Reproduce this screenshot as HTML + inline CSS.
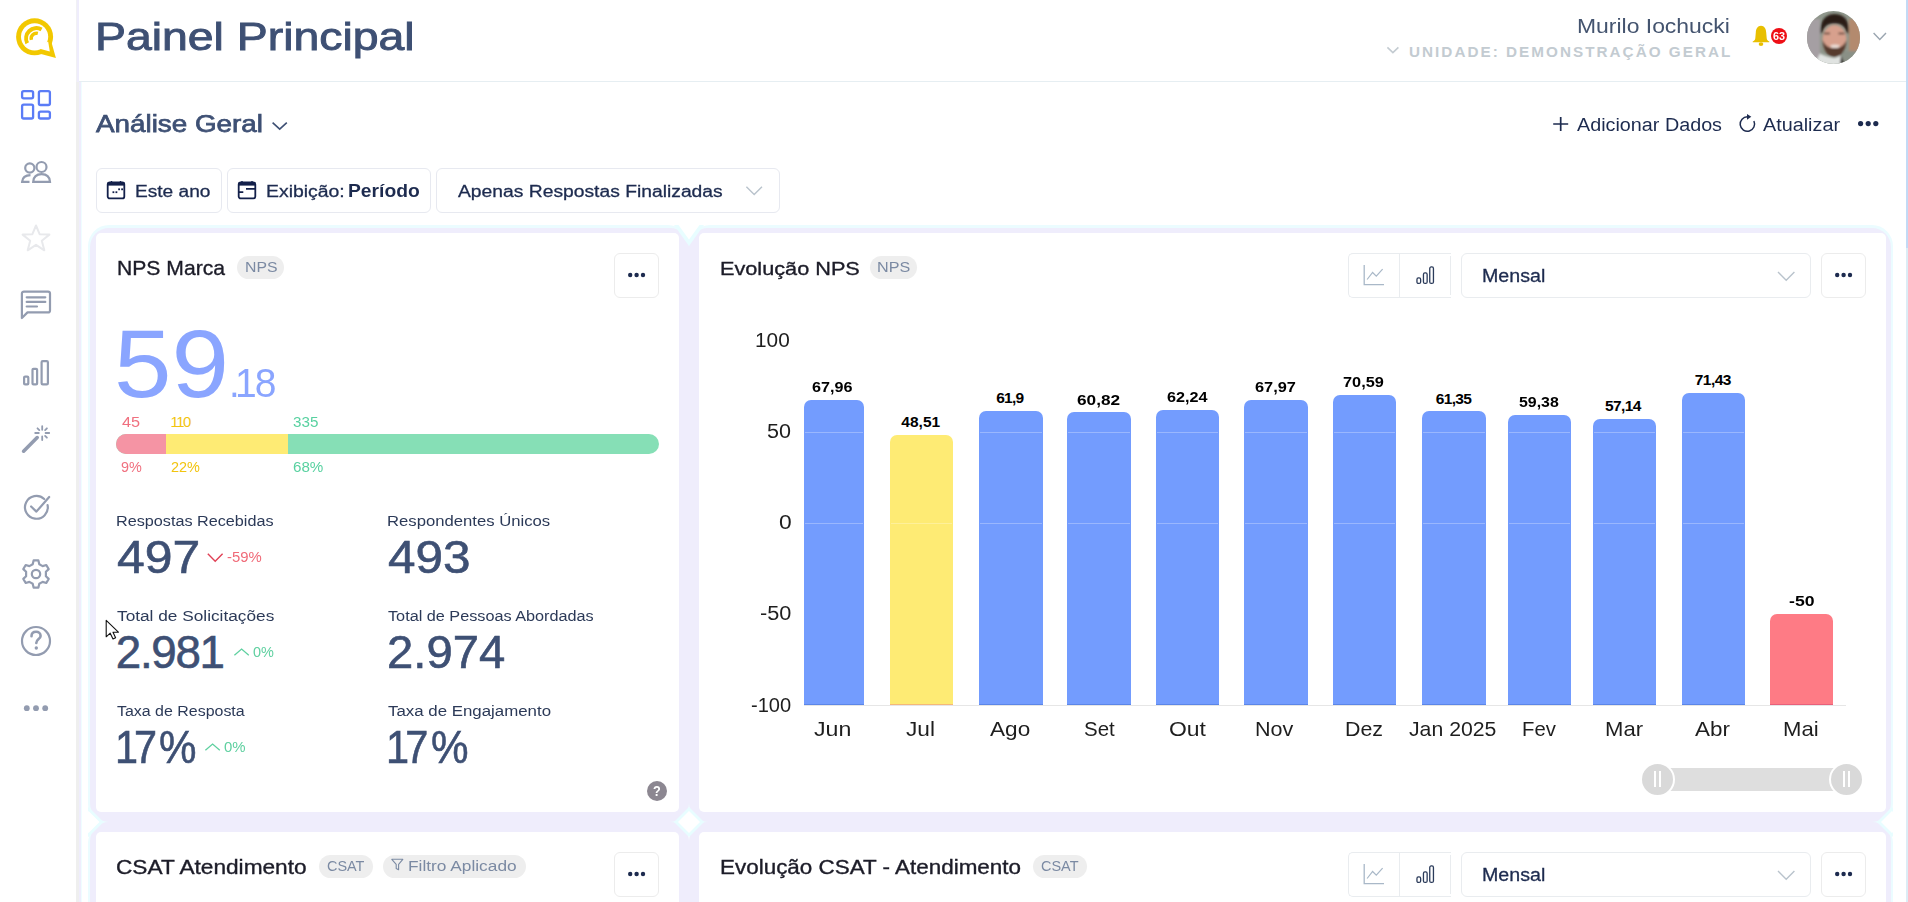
<!DOCTYPE html>
<html lang="pt-BR">
<head>
<meta charset="utf-8">
<title>Painel Principal</title>
<style>
html,body{margin:0;padding:0;width:1908px;height:902px;overflow:hidden;background:#fff;}
body{position:relative;font-family:"Liberation Sans",sans-serif;}
.a{position:absolute;box-sizing:border-box;}
.t{position:absolute;white-space:nowrap;transform-origin:0 0;font-family:"Liberation Sans",sans-serif;}
svg{position:absolute;overflow:visible;}
.btn{position:absolute;box-sizing:border-box;border:1px solid #e7e9f0;border-radius:6px;background:#fff;}
.item-sh{position:absolute;border-radius:21px;background:#ebfcff;}
.item{position:absolute;border-radius:19px;background:#efedfc;}
.card{position:absolute;border-radius:5px;background:#fff;}
.badge{position:absolute;border-radius:12px;background:#eeeeee;}
</style>
</head>
<body>
<!-- sidebar -->
<div class="a" style="left:0;top:0;width:76px;height:902px;background:#fff;"></div>
<div class="a" style="left:76px;top:0;width:1px;height:82px;background:#f1f1f4;"></div>
<div class="a" style="left:77px;top:0;width:2px;height:82px;background:#efedfc;"></div>
<div class="a" style="left:76px;top:82px;width:3px;height:820px;background:#efefef;"></div>
<div class="a" style="left:79px;top:82px;width:2px;height:820px;background:#efedfc;"></div>
<div class="a" style="left:81px;top:82px;width:1px;height:820px;background:#effdff;"></div>
<!-- header bottom line -->
<div class="a" style="left:79px;top:81px;width:1827px;height:1px;background:#e6eef2;"></div>
<!-- scrollbar -->
<div class="a" style="left:1906px;top:0;width:2px;height:248px;background:#c3daf5;"></div>
<div class="a" style="left:1906px;top:248px;width:2px;height:654px;background:#dcecf5;"></div>

<!-- logo -->
<svg width="80" height="80" style="left:0;top:0" viewBox="0 0 80 80">
  <circle cx="34.6" cy="36.8" r="18.5" fill="#f2c800"/>
  <polygon points="51.6,42.7 55.9,57.9 41,53.9 44,44" fill="#f2c800"/>
  <circle cx="34.6" cy="36.8" r="13.6" fill="#fff"/>
  <polygon points="48.2,41.7 49.8,51.5 40.7,49.1 42,44" fill="#fff"/>
  <path d="M27.23 43.22 A10.4 10.4 0 0 1 41.54 29.4" fill="none" stroke="#f2c800" stroke-width="4"/>
  <path d="M31.38 39.87 A5.3 5.3 0 0 1 37.87 33.38" fill="none" stroke="#f2c800" stroke-width="3.4"/>
</svg>

<!-- sidebar icons -->
<svg width="80" height="760" style="left:0;top:0" viewBox="0 0 80 760">
  <g fill="none" stroke="#5b7cf6" stroke-width="2.3">
    <rect x="22.1" y="91.1" width="11" height="7.2" rx="1.6"/>
    <rect x="22.1" y="104.6" width="11" height="13.9" rx="1.6"/>
    <rect x="38.9" y="91.1" width="11" height="13.9" rx="1.6"/>
    <rect x="38.9" y="111.6" width="11" height="6.9" rx="1.6"/>
  </g>
  <g fill="none" stroke="#939cb0" stroke-width="2.2">
    <!-- people -->
    <circle cx="29.8" cy="168" r="4.6"/>
    <circle cx="41.5" cy="167" r="5"/>
    <path d="M33.2 181.8 C33.6 176.5 37 174.2 41.6 174.2 C46.2 174.2 49.6 176.5 50 181.8 Z"/>
    <path d="M30.5 175.2 C25.5 175.4 22.4 178 22.1 181.8 L29.5 181.8"/>
  </g>
  <!-- star -->
  <path d="M36 225.5 L39.6 234.2 L49.4 234.6 L41.8 240.7 L44.3 250.3 L36 244.8 L27.7 250.3 L30.2 240.7 L22.6 234.6 L32.4 234.2 Z" fill="none" stroke="#e8e9ec" stroke-width="2" stroke-linejoin="round"/>
  <g fill="none" stroke="#939cb0" stroke-width="2.2" stroke-linecap="round" stroke-linejoin="round">
    <!-- chat -->
    <path d="M24 291.6 H48 A2 2 0 0 1 50 293.6 V310.4 A2 2 0 0 1 48 312.4 H27.5 L21.9 318 V293.6 A2 2 0 0 1 24 291.6 Z"/>
    <path d="M26.7 297.3 H45.3 M26.7 301.9 H45.3 M26.7 306.5 H37"/>
    <!-- bars -->
    <rect x="24.1" y="376.6" width="4.2" height="7.8" rx="1"/>
    <rect x="32.5" y="368.8" width="4.6" height="15.6" rx="1"/>
    <rect x="41.6" y="361.1" width="6.3" height="23.3" rx="1.2"/>
    <!-- check circle -->
    <path d="M47.6 505.2 A11.4 11.4 0 1 1 44.2 499.0"/>
    <path d="M31.1 506.5 L36.4 511.6 L49.2 497"/>
    <!-- gear -->
    <circle cx="36" cy="574" r="4.2"/>
    <path d="M33.6 560.4 H38.4 L39.3 564.2 L42.6 566.1 L46.3 565 L48.7 569.1 L45.9 571.8 V576.2 L48.7 578.9 L46.3 583 L42.6 581.9 L39.3 583.8 L38.4 587.6 H33.6 L32.7 583.8 L29.4 581.9 L25.7 583 L23.3 578.9 L26.1 576.2 V571.8 L23.3 569.1 L25.7 565 L29.4 566.1 L32.7 564.2 Z"/>
    <!-- help -->
    <circle cx="36" cy="641" r="14"/>
  </g>
  <!-- wand -->
  <g stroke="#939cb0" stroke-linecap="round">
    <path d="M23.6 451.2 L37.2 437.6" stroke-width="3.6"/>
    <path d="M42.2 426.2 V429.8 M42.2 436.4 V440 M35.2 433 H38.8 M45.6 433 H49.2 M37.5 428.3 L39.3 430.1 M45.1 435.9 L46.9 437.7 M46.9 428.3 L45.1 430.1" stroke-width="1.8"/>
  </g>
  <path d="M36.7 638.4 M31.5 636.3 C31.5 633.4 33.5 631.8 36.1 631.8 C38.7 631.8 40.6 633.4 40.6 635.9 C40.6 638.9 36.3 639.3 36.3 642.9" fill="none" stroke="#939cb0" stroke-width="2.6" stroke-linecap="round"/>
  <circle cx="36.3" cy="648" r="1.7" fill="#939cb0"/>
  <!-- dots -->
  <circle cx="26.8" cy="708.2" r="2.9" fill="#939cb0"/>
  <circle cx="36" cy="708.2" r="2.9" fill="#939cb0"/>
  <circle cx="45.2" cy="708.2" r="2.9" fill="#939cb0"/>
</svg>

<!-- header right -->
<svg width="20" height="20" style="left:1380px;top:40px" viewBox="0 0 20 20">
  <path d="M7.4 7.4 L12.9 12.6 L18.4 7.4" fill="none" stroke="#c3cbd1" stroke-width="1.6"/>
</svg>
<svg width="40" height="30" style="left:1748px;top:20px" viewBox="0 0 40 30">
  <path d="M13 5.8 C9.6 5.8 8 8.8 7.8 12.5 L7.3 18.2 C7.1 19.9 6.1 20.9 4.7 21.4 V22.3 H21.3 V21.4 C19.9 20.9 18.9 19.9 18.7 18.2 L18.2 12.5 C18 8.8 16.4 5.8 13 5.8 Z" fill="#e8bf00"/>
  <ellipse cx="13" cy="24.1" rx="2.3" ry="1.9" fill="#e8bf00"/>
  <circle cx="31" cy="16" r="8" fill="#ee0f16"/>
</svg>
<!-- avatar -->
<svg width="53" height="53" style="left:1807px;top:11px" viewBox="0 0 53 53">
  <defs>
    <clipPath id="avc"><circle cx="26.5" cy="26.5" r="26.5"/></clipPath>
    <filter id="avb" x="-20%" y="-20%" width="140%" height="140%"><feGaussianBlur stdDeviation="1.3"/></filter>
  </defs>
  <g clip-path="url(#avc)">
    <rect x="0" y="0" width="53" height="53" fill="#8f968b"/>
    <g filter="url(#avb)">
      <rect x="-4" y="8" width="17" height="50" fill="#a59fa3"/>
      <rect x="42" y="8" width="15" height="36" fill="#b38a6e"/>
      <rect x="36" y="40" width="20" height="15" fill="#8a9086"/>
      <ellipse cx="27.5" cy="28.5" rx="12" ry="14.5" fill="#d7a08d"/>
      <path d="M13.5 23 C12.5 9 19 3 27.5 3 C37 3 43 9 41.5 23 L39.5 21 C38 15 34 12.5 27.5 12.5 C21 12.5 17 15 15.5 21 Z" fill="#2a1e18"/>
      <path d="M17 22.5 H23 M31.5 22.5 H37.5" stroke="#4a3028" stroke-width="1.6"/>
      <path d="M15.5 29 C16.5 41 21.5 46 27.5 46 C33.5 46 38.5 41 39.5 29 C36.5 35.5 32.5 37 27.5 37 C22.5 37 18.5 35.5 15.5 29 Z" fill="#573a2e"/>
      <ellipse cx="28" cy="35.2" rx="4.6" ry="1.8" fill="#eadbd4"/>
      <path d="M7 54 L13 42.5 C17 44.5 22 46.5 27.5 47 L34 44.5 L35 54 Z" fill="#e0e3e1"/>
      <path d="M34 44 L38 54 L33 54 Z" fill="#2f2b29"/>
    </g>
  </g>
</svg>
<svg width="20" height="20" style="left:1870px;top:28px" viewBox="0 0 20 20">
  <path d="M3.6 5 L9.8 11.4 L16 5" fill="none" stroke="#9aa5b0" stroke-width="1.4"/>
</svg>

<!-- toolbar icons -->
<svg width="30" height="20" style="left:268px;top:116px" viewBox="0 0 30 20">
  <path d="M4.6 6.6 L11.7 13.2 L18.8 6.6" fill="none" stroke="#3e5074" stroke-width="1.6"/>
</svg>
<svg width="20" height="20" style="left:1551px;top:114px" viewBox="0 0 20 20">
  <path d="M9.7 3 V17 M2.2 10 H17.2" fill="none" stroke="#1d2b4f" stroke-width="1.7"/>
</svg>
<svg width="20" height="20" style="left:1737px;top:113px" viewBox="0 0 20 20">
  <path d="M16.9 7.96 A7.2 7.2 0 1 1 10.6 3.8" fill="none" stroke="#1d2b4f" stroke-width="1.5"/>
  <polygon points="10,0.9 14.3,3.8 10,6.7" fill="#1d2b4f"/>
</svg>
<svg width="30" height="10" style="left:1855px;top:119px" viewBox="0 0 30 10">
  <circle cx="5.6" cy="4.6" r="2.6" fill="#1d2b4f"/><circle cx="13.2" cy="4.6" r="2.6" fill="#1d2b4f"/><circle cx="20.8" cy="4.6" r="2.6" fill="#1d2b4f"/>
</svg>

<!-- filter buttons -->
<div class="btn" style="left:96px;top:168px;width:126px;height:45px;"></div>
<div class="btn" style="left:227px;top:168px;width:204px;height:45px;"></div>
<div class="btn" style="left:436px;top:168px;width:344px;height:45px;"></div>
<svg width="20" height="20" style="left:106px;top:180px" viewBox="0 0 20 20">
  <rect x="1.7" y="2.4" width="16.6" height="16" rx="2" fill="none" stroke="#13204a" stroke-width="1.8"/>
  <rect x="1.7" y="2" width="16.6" height="3.6" fill="#13204a"/>
  <path d="M5.5 1 V3 M14.5 1 V3" stroke="#13204a" stroke-width="1.4"/>
  <rect x="6.5" y="11.3" width="1.8" height="1.8" fill="#13204a"/><rect x="9.5" y="11.3" width="1.8" height="1.8" fill="#13204a"/>
  <rect x="12.2" y="8.4" width="1.8" height="1.8" fill="#13204a"/><rect x="15.2" y="8.4" width="1.8" height="1.8" fill="#13204a"/>
</svg>
<svg width="20" height="20" style="left:237px;top:180px" viewBox="0 0 20 20">
  <rect x="1.7" y="2.4" width="16.6" height="16" rx="2" fill="none" stroke="#13204a" stroke-width="1.8"/>
  <rect x="1.7" y="2" width="16.6" height="3.6" fill="#13204a"/>
  <path d="M5 1 V3 M15 1 V3" stroke="#13204a" stroke-width="1.4"/>
  <path d="M9 8.9 H18 M1.7 12.2 H6.3" stroke="#13204a" stroke-width="1.8"/>
</svg>
<svg width="20" height="20" style="left:744px;top:181px" viewBox="0 0 20 20">
  <path d="M2.4 5.8 L10.2 13.6 L18 5.8" fill="none" stroke="#b9c3cc" stroke-width="1.4"/>
</svg>

<!-- grid items -->
<div class="item-sh" style="left:88px;top:225px;width:601px;height:600px;"></div>
<div class="item-sh" style="left:689px;top:225px;width:1204px;height:600px;"></div>
<div class="item-sh" style="left:88px;top:822px;width:601px;height:200px;"></div>
<div class="item-sh" style="left:689px;top:822px;width:1204px;height:200px;"></div>
<div class="item" style="left:90px;top:227.5px;width:599px;height:594.5px;"></div>
<div class="item" style="left:689px;top:227.5px;width:1202px;height:594.5px;"></div>
<div class="item" style="left:90px;top:822px;width:599px;height:200px;"></div>
<div class="item" style="left:689px;top:822px;width:1202px;height:200px;"></div>
<!-- white intersection diamond covers -->
<svg width="1908" height="902" style="left:0;top:0" viewBox="0 0 1908 902"><defs><clipPath id="dc"><rect x="88" y="225" width="1805" height="700"/></clipPath></defs><g clip-path="url(#dc)"><polygon points="674,225 704,225 689,246" fill="#e8fdff"/><polygon points="678.5,225 699.5,225 689,239.5" fill="#fff"/><polygon points="674,822 689,807 704,822 689,837" fill="#e8fdff"/><polygon points="678,822 689,811 700,822 689,833" fill="#fff"/><polygon points="73.5,822 88.5,807 103.5,822 88.5,837" fill="#e8fdff"/><polygon points="77.5,822 88.5,811 99.5,822 88.5,833" fill="#fff"/><polygon points="1877,822 1892,807 1907,822 1892,837" fill="#e8fdff"/><polygon points="1881,822 1892,811 1903,822 1892,833" fill="#fff"/></g></svg>

<div class="card" style="left:96px;top:233px;width:583px;height:579px;"></div>
<div class="card" style="left:699px;top:233px;width:1187px;height:579px;"></div>
<div class="card" style="left:96px;top:832px;width:583px;height:200px;"></div>
<div class="card" style="left:699px;top:832px;width:1187px;height:200px;"></div>

<!-- card 1 -->
<div class="badge" style="left:237px;top:256px;width:47px;height:23px;"></div>
<div class="btn" style="left:614px;top:253px;width:45px;height:45px;border-color:#ececec;"></div>
<svg width="20" height="6" style="left:627px;top:272px" viewBox="0 0 20 6">
  <circle cx="3.2" cy="3" r="2.2" fill="#1d2b4f"/><circle cx="9.6" cy="3" r="2.2" fill="#1d2b4f"/><circle cx="16" cy="3" r="2.2" fill="#1d2b4f"/>
</svg>
<div class="a" style="left:116px;top:434px;width:543px;height:20px;border-radius:10px;overflow:hidden;background:#86dfb6;">
  <div class="a" style="left:0;top:0;width:50px;height:20px;background:#f594a4;"></div>
  <div class="a" style="left:50px;top:0;width:122px;height:20px;background:#feeb74;"></div>
</div>
<svg width="20" height="14" style="left:205px;top:550px" viewBox="0 0 20 14">
  <path d="M2.8 3.8 L10.2 11.2 L17.6 3.8" fill="none" stroke="#e04055" stroke-width="1.4"/>
</svg>
<svg width="20" height="14" style="left:231.5px;top:643px" viewBox="0 0 20 14">
  <path d="M2.4 12.2 L9.6 6.1 L16.8 12.2" fill="none" stroke="#5fd0a0" stroke-width="1.3"/>
</svg>
<svg width="20" height="14" style="left:203px;top:738px" viewBox="0 0 20 14">
  <path d="M2.4 12.2 L9.6 6.1 L16.8 12.2" fill="none" stroke="#5fd0a0" stroke-width="1.3"/>
</svg>
<div class="a" style="left:647px;top:781px;width:20px;height:20px;border-radius:50%;background:#8c8791;"></div>
<!-- cursor -->
<svg width="20" height="24" style="left:104px;top:619px" viewBox="0 0 20 24">
  <path d="M2.2 1.3 V17.8 L6.2 14.2 L9 20 L11.6 18.8 L9 13.2 H14.4 Z" fill="#fff" stroke="#111" stroke-width="1.1" stroke-linejoin="round"/>
</svg>

<!-- card 2 -->
<div class="badge" style="left:870px;top:256px;width:47px;height:23px;"></div>
<div class="a" style="left:1348px;top:253px;width:102.5px;height:44.5px;border:1px solid #e9ecef;border-right:none;border-radius:5px 0 0 5px;"></div>
<div class="a" style="left:1450px;top:256px;width:1px;height:39px;background:#e9ecef;"></div>
<div class="a" style="left:1399px;top:253px;width:1px;height:44.5px;background:#e9ecef;"></div>
<svg width="30" height="30" style="left:1360px;top:260px" viewBox="0 0 30 30">
  <path d="M4.2 5 V24.6 H24" fill="none" stroke="#a9b8c8" stroke-width="1.3"/>
  <path d="M7.1 19.5 L12.6 12.5 L16.3 16.2 L22.6 9.2" fill="none" stroke="#a9b8c8" stroke-width="1.2"/>
</svg>
<svg width="30" height="30" style="left:1410px;top:260px" viewBox="0 0 30 30">
  <g fill="none" stroke="#2b3b5a" stroke-width="1.3">
    <rect x="6.95" y="17.95" width="3.7" height="5.5" rx="1.5"/>
    <rect x="13.45" y="12.95" width="3.7" height="10.5" rx="1.5"/>
    <rect x="19.75" y="6.95" width="3.7" height="16.5" rx="1.5"/>
  </g>
</svg>
<div class="btn" style="left:1461px;top:253px;width:350px;height:44.5px;border-color:#e9ecef;"></div>
<svg width="24" height="16" style="left:1774px;top:268px" viewBox="0 0 24 16">
  <path d="M4 4 L12.2 12.2 L20.4 4" fill="none" stroke="#b9c3cc" stroke-width="1.4"/>
</svg>
<div class="btn" style="left:1821px;top:253px;width:44.5px;height:44.5px;border-color:#ececec;"></div>
<svg width="20" height="6" style="left:1833.5px;top:272px" viewBox="0 0 20 6">
  <circle cx="3.2" cy="3" r="2.2" fill="#1d2b4f"/><circle cx="9.6" cy="3" r="2.2" fill="#1d2b4f"/><circle cx="16" cy="3" r="2.2" fill="#1d2b4f"/>
</svg>
<!-- axis line -->
<div class="a" style="left:804px;top:704.5px;width:1042px;height:1.5px;background:#e6e6e6;"></div>
<div class="a" style="left:804.2px;top:399.8px;width:60.2px;height:305.4px;background:#739cfe;border-radius:7px 7px 0 0;"></div>
<div class="a" style="left:804.2px;top:704px;width:60.2px;height:1.2px;background:#5b86e8;"></div>
<div class="a" style="left:805.2px;top:431.6px;width:58.2px;height:1px;background:rgba(255,255,255,0.28);"></div>
<div class="a" style="left:805.2px;top:522.7px;width:58.2px;height:1px;background:rgba(255,255,255,0.28);"></div>
<div class="a" style="left:889.6px;top:435.0px;width:63.1px;height:270.2px;background:#feeb74;border-radius:7px 7px 0 0;"></div>
<div class="a" style="left:889.6px;top:704px;width:63.1px;height:1.2px;background:#f5b878;"></div>
<div class="a" style="left:890.6px;top:522.7px;width:61.1px;height:1px;background:rgba(255,255,255,0.28);"></div>
<div class="a" style="left:979.0px;top:410.8px;width:63.5px;height:294.4px;background:#739cfe;border-radius:7px 7px 0 0;"></div>
<div class="a" style="left:979.0px;top:704px;width:63.5px;height:1.2px;background:#5b86e8;"></div>
<div class="a" style="left:980.0px;top:431.6px;width:61.5px;height:1px;background:rgba(255,255,255,0.28);"></div>
<div class="a" style="left:980.0px;top:522.7px;width:61.5px;height:1px;background:rgba(255,255,255,0.28);"></div>
<div class="a" style="left:1067.4px;top:412.4px;width:63.4px;height:292.8px;background:#739cfe;border-radius:7px 7px 0 0;"></div>
<div class="a" style="left:1067.4px;top:704px;width:63.4px;height:1.2px;background:#5b86e8;"></div>
<div class="a" style="left:1068.4px;top:431.6px;width:61.4px;height:1px;background:rgba(255,255,255,0.28);"></div>
<div class="a" style="left:1068.4px;top:522.7px;width:61.4px;height:1px;background:rgba(255,255,255,0.28);"></div>
<div class="a" style="left:1156.0px;top:409.9px;width:63.4px;height:295.3px;background:#739cfe;border-radius:7px 7px 0 0;"></div>
<div class="a" style="left:1156.0px;top:704px;width:63.4px;height:1.2px;background:#5b86e8;"></div>
<div class="a" style="left:1157.0px;top:431.6px;width:61.4px;height:1px;background:rgba(255,255,255,0.28);"></div>
<div class="a" style="left:1157.0px;top:522.7px;width:61.4px;height:1px;background:rgba(255,255,255,0.28);"></div>
<div class="a" style="left:1244.3px;top:399.8px;width:63.4px;height:305.4px;background:#739cfe;border-radius:7px 7px 0 0;"></div>
<div class="a" style="left:1244.3px;top:704px;width:63.4px;height:1.2px;background:#5b86e8;"></div>
<div class="a" style="left:1245.3px;top:431.6px;width:61.4px;height:1px;background:rgba(255,255,255,0.28);"></div>
<div class="a" style="left:1245.3px;top:522.7px;width:61.4px;height:1px;background:rgba(255,255,255,0.28);"></div>
<div class="a" style="left:1332.7px;top:394.5px;width:63.1px;height:310.7px;background:#739cfe;border-radius:7px 7px 0 0;"></div>
<div class="a" style="left:1332.7px;top:704px;width:63.1px;height:1.2px;background:#5b86e8;"></div>
<div class="a" style="left:1333.7px;top:431.6px;width:61.1px;height:1px;background:rgba(255,255,255,0.28);"></div>
<div class="a" style="left:1333.7px;top:522.7px;width:61.1px;height:1px;background:rgba(255,255,255,0.28);"></div>
<div class="a" style="left:1422.4px;top:411.4px;width:63.4px;height:293.8px;background:#739cfe;border-radius:7px 7px 0 0;"></div>
<div class="a" style="left:1422.4px;top:704px;width:63.4px;height:1.2px;background:#5b86e8;"></div>
<div class="a" style="left:1423.4px;top:431.6px;width:61.4px;height:1px;background:rgba(255,255,255,0.28);"></div>
<div class="a" style="left:1423.4px;top:522.7px;width:61.4px;height:1px;background:rgba(255,255,255,0.28);"></div>
<div class="a" style="left:1508.0px;top:414.9px;width:63.0px;height:290.3px;background:#739cfe;border-radius:7px 7px 0 0;"></div>
<div class="a" style="left:1508.0px;top:704px;width:63.0px;height:1.2px;background:#5b86e8;"></div>
<div class="a" style="left:1509.0px;top:431.6px;width:61.0px;height:1px;background:rgba(255,255,255,0.28);"></div>
<div class="a" style="left:1509.0px;top:522.7px;width:61.0px;height:1px;background:rgba(255,255,255,0.28);"></div>
<div class="a" style="left:1593.3px;top:419.0px;width:63.1px;height:286.2px;background:#739cfe;border-radius:7px 7px 0 0;"></div>
<div class="a" style="left:1593.3px;top:704px;width:63.1px;height:1.2px;background:#5b86e8;"></div>
<div class="a" style="left:1594.3px;top:431.6px;width:61.1px;height:1px;background:rgba(255,255,255,0.28);"></div>
<div class="a" style="left:1594.3px;top:522.7px;width:61.1px;height:1px;background:rgba(255,255,255,0.28);"></div>
<div class="a" style="left:1681.8px;top:392.9px;width:62.8px;height:312.3px;background:#739cfe;border-radius:7px 7px 0 0;"></div>
<div class="a" style="left:1681.8px;top:704px;width:62.8px;height:1.2px;background:#5b86e8;"></div>
<div class="a" style="left:1682.8px;top:431.6px;width:60.8px;height:1px;background:rgba(255,255,255,0.28);"></div>
<div class="a" style="left:1682.8px;top:522.7px;width:60.8px;height:1px;background:rgba(255,255,255,0.28);"></div>
<div class="a" style="left:1770.3px;top:613.7px;width:62.8px;height:91.5px;background:#fe7b85;border-radius:7px 7px 0 0;"></div>
<div class="a" style="left:1770.3px;top:704px;width:62.8px;height:1.2px;background:#e8607a;"></div>
<!-- slider -->
<div class="a" style="left:1657px;top:767.5px;width:189px;height:23px;background:#dedede;"></div>
<div class="a" style="left:1639.5px;top:762px;width:35px;height:35px;border-radius:50%;background:#d9d9d9;border:2px solid #fff;"></div>
<div class="a" style="left:1828.5px;top:762px;width:35px;height:35px;border-radius:50%;background:#d9d9d9;border:2px solid #fff;"></div>
<div class="a" style="left:1653.5px;top:771px;width:2px;height:16px;background:#fff;"></div>
<div class="a" style="left:1658.5px;top:771px;width:2px;height:16px;background:#fff;"></div>
<div class="a" style="left:1842.5px;top:771px;width:2px;height:16px;background:#fff;"></div>
<div class="a" style="left:1847.5px;top:771px;width:2px;height:16px;background:#fff;"></div>

<!-- card 3 -->
<div class="badge" style="left:319px;top:854.5px;width:54px;height:23px;"></div>
<div class="badge" style="left:383px;top:854.5px;width:143px;height:23px;"></div>
<svg width="14" height="14" style="left:390px;top:858px" viewBox="0 0 14 14">
  <path d="M1.8 1.3 H12.8 L8.6 6.4 V11.8 L6.2 10.4 V6.4 Z" fill="none" stroke="#7b8aa3" stroke-width="1.1" stroke-linejoin="round"/>
</svg>
<div class="btn" style="left:614px;top:852px;width:45px;height:45px;border-color:#ececec;"></div>
<svg width="20" height="6" style="left:627px;top:871px" viewBox="0 0 20 6">
  <circle cx="3.2" cy="3" r="2.2" fill="#1d2b4f"/><circle cx="9.6" cy="3" r="2.2" fill="#1d2b4f"/><circle cx="16" cy="3" r="2.2" fill="#1d2b4f"/>
</svg>
<!-- card 4 -->
<div class="badge" style="left:1033px;top:854.5px;width:54px;height:23px;"></div>
<div class="a" style="left:1348px;top:852px;width:102.5px;height:44.5px;border:1px solid #e9ecef;border-right:none;border-radius:5px 0 0 5px;"></div>
<div class="a" style="left:1450px;top:855px;width:1px;height:39px;background:#e9ecef;"></div>
<div class="a" style="left:1399px;top:852px;width:1px;height:44.5px;background:#e9ecef;"></div>
<svg width="30" height="30" style="left:1360px;top:859px" viewBox="0 0 30 30">
  <path d="M4.2 5 V24.6 H24" fill="none" stroke="#a9b8c8" stroke-width="1.3"/>
  <path d="M7.1 19.5 L12.6 12.5 L16.3 16.2 L22.6 9.2" fill="none" stroke="#a9b8c8" stroke-width="1.2"/>
</svg>
<svg width="30" height="30" style="left:1410px;top:859px" viewBox="0 0 30 30">
  <g fill="none" stroke="#2b3b5a" stroke-width="1.3">
    <rect x="6.95" y="17.95" width="3.7" height="5.5" rx="1.5"/>
    <rect x="13.45" y="12.95" width="3.7" height="10.5" rx="1.5"/>
    <rect x="19.75" y="6.95" width="3.7" height="16.5" rx="1.5"/>
  </g>
</svg>
<div class="btn" style="left:1461px;top:852px;width:350px;height:44.5px;border-color:#e9ecef;"></div>
<svg width="24" height="16" style="left:1774px;top:867px" viewBox="0 0 24 16">
  <path d="M4 4 L12.2 12.2 L20.4 4" fill="none" stroke="#b9c3cc" stroke-width="1.4"/>
</svg>
<div class="btn" style="left:1821px;top:852px;width:44.5px;height:44.5px;border-color:#ececec;"></div>
<svg width="20" height="6" style="left:1833.5px;top:871px" viewBox="0 0 20 6">
  <circle cx="3.2" cy="3" r="2.2" fill="#1d2b4f"/><circle cx="9.6" cy="3" r="2.2" fill="#1d2b4f"/><circle cx="16" cy="3" r="2.2" fill="#1d2b4f"/>
</svg>

<div class="t" style="left:94.88px;top:17px;font-size:39.00px;line-height:39.00px;color:#3e5074;-webkit-text-stroke:0.9px #3e5074;transform:scaleX(1.1891);">Painel Principal</div>
<div class="t" style="left:1577.38px;top:16px;font-size:20.50px;line-height:20.50px;color:#44546f;transform:scaleX(1.1179);">Murilo Iochucki</div>
<div class="t" style="left:1409.00px;top:44px;font-size:15.25px;line-height:15.25px;color:#c3cbd1;font-weight:bold;letter-spacing:2.029px;">UNIDADE: DEMONSTRAÇÃO GERAL</div>
<div class="t" style="left:1772.60px;top:31px;font-size:10.50px;line-height:10.50px;color:#fff;font-weight:bold;transform:scaleX(1.0304);">63</div>
<div class="t" style="left:96.38px;top:112px;font-size:24.75px;line-height:24.75px;color:#3e5074;-webkit-text-stroke:0.75px #3e5074;transform:scaleX(1.1236);">Análise Geral</div>
<div class="t" style="left:1577.00px;top:116px;font-size:18.00px;line-height:18.00px;color:#1d2b4f;transform:scaleX(1.0979);">Adicionar Dados</div>
<div class="t" style="left:1763.00px;top:116px;font-size:18.00px;line-height:18.00px;color:#1d2b4f;transform:scaleX(1.0994);">Atualizar</div>
<div class="t" style="left:135.04px;top:183px;font-size:17.25px;line-height:17.25px;color:#1d2b4f;-webkit-text-stroke:0.3px #1d2b4f;transform:scaleX(1.1083);">Este ano</div>
<div class="t" style="left:265.53px;top:183px;font-size:17.25px;line-height:17.25px;color:#1d2b4f;-webkit-text-stroke:0.3px #1d2b4f;transform:scaleX(1.1246);">Exibição:</div>
<div class="t" style="left:348.14px;top:182px;font-size:18.25px;line-height:18.25px;color:#1d2b4f;font-weight:bold;transform:scaleX(1.0555);">Período</div>
<div class="t" style="left:457.55px;top:183px;font-size:17.25px;line-height:17.25px;color:#1d2b4f;-webkit-text-stroke:0.3px #1d2b4f;transform:scaleX(1.1176);">Apenas Respostas Finalizadas</div>
<div class="t" style="left:117.11px;top:259px;font-size:19.75px;line-height:19.75px;color:#1c1c28;-webkit-text-stroke:0.35px #1c1c28;transform:scaleX(1.0697);">NPS Marca</div>
<div class="t" style="left:244.51px;top:260px;font-size:14.50px;line-height:14.50px;color:#7b8aa3;transform:scaleX(1.0909);">NPS</div>
<div class="t" style="left:114.18px;top:316px;font-size:96.50px;line-height:96.50px;color:#8aa5ff;transform:scaleX(1.0718);">59</div>
<div class="t" style="left:229.08px;top:363px;font-size:41.00px;line-height:41.00px;color:#8aa5ff;transform:scaleX(0.9400);">.</div>
<div class="t" style="left:235.34px;top:363px;font-size:41.00px;line-height:41.00px;color:#8aa5ff;transform:scaleX(0.9522);letter-spacing:-1.999px;">18</div>
<div class="t" style="left:121.50px;top:414px;font-size:15.00px;line-height:15.00px;color:#f0707f;transform:scaleX(1.0831);">45</div>
<div class="t" style="left:170.50px;top:414px;font-size:15.00px;line-height:15.00px;color:#f2c40f;letter-spacing:-1.536px;">110</div>
<div class="t" style="left:293.00px;top:414px;font-size:15.00px;line-height:15.00px;color:#58d1a0;transform:scaleX(1.0128);">335</div>
<div class="t" style="left:121.10px;top:459px;font-size:15.25px;line-height:15.25px;color:#f0707f;transform:scaleX(0.9430);">9%</div>
<div class="t" style="left:170.90px;top:459px;font-size:15.25px;line-height:15.25px;color:#f2c40f;transform:scaleX(0.9463);">22%</div>
<div class="t" style="left:293.20px;top:459px;font-size:15.25px;line-height:15.25px;color:#58d1a0;transform:scaleX(0.9947);">68%</div>
<div class="t" style="left:115.74px;top:513px;font-size:15.25px;line-height:15.25px;color:#2c3a58;transform:scaleX(1.0621);">Respostas Recebidas</div>
<div class="t" style="left:116.71px;top:535px;font-size:45.75px;line-height:45.75px;color:#3e5074;-webkit-text-stroke:0.6px #3e5074;transform:scaleX(1.0908);">497</div>
<div class="t" style="left:387.21px;top:513px;font-size:15.25px;line-height:15.25px;color:#2c3a58;transform:scaleX(1.0937);">Respondentes Únicos</div>
<div class="t" style="left:387.72px;top:535px;font-size:45.75px;line-height:45.75px;color:#3e5074;-webkit-text-stroke:0.6px #3e5074;transform:scaleX(1.0814);">493</div>
<div class="t" style="left:116.80px;top:608px;font-size:15.25px;line-height:15.25px;color:#2c3a58;transform:scaleX(1.1313);">Total de Solicitações</div>
<div class="t" style="left:115.80px;top:630px;font-size:45.75px;line-height:45.75px;color:#3e5074;-webkit-text-stroke:0.6px #3e5074;letter-spacing:-1.311px;">2.981</div>
<div class="t" style="left:388.30px;top:608px;font-size:15.25px;line-height:15.25px;color:#2c3a58;transform:scaleX(1.0642);">Total de Pessoas Abordadas</div>
<div class="t" style="left:386.73px;top:630px;font-size:45.75px;line-height:45.75px;color:#3e5074;-webkit-text-stroke:0.6px #3e5074;transform:scaleX(1.0326);">2.974</div>
<div class="t" style="left:116.80px;top:703px;font-size:15.25px;line-height:15.25px;color:#2c3a58;transform:scaleX(1.0457);">Taxa de Resposta</div>
<div class="t" style="left:114.88px;top:725px;font-size:45.75px;line-height:45.75px;color:#3e5074;-webkit-text-stroke:0.6px #3e5074;transform:scaleX(0.9057);letter-spacing:-4.378px;">17</div>
<div class="t" style="left:159.18px;top:725px;font-size:45.75px;line-height:45.75px;color:#3e5074;-webkit-text-stroke:0.6px #3e5074;transform:scaleX(0.9205);">%</div>
<div class="t" style="left:388.30px;top:703px;font-size:15.25px;line-height:15.25px;color:#2c3a58;transform:scaleX(1.1052);">Taxa de Engajamento</div>
<div class="t" style="left:386.18px;top:725px;font-size:45.75px;line-height:45.75px;color:#3e5074;-webkit-text-stroke:0.6px #3e5074;transform:scaleX(0.9069);letter-spacing:-4.323px;">17</div>
<div class="t" style="left:430.58px;top:725px;font-size:45.75px;line-height:45.75px;color:#3e5074;-webkit-text-stroke:0.6px #3e5074;transform:scaleX(0.9231);">%</div>
<div class="t" style="left:227.00px;top:549px;font-size:15.50px;line-height:15.50px;color:#f06a78;transform:scaleX(0.9587);">-59%</div>
<div class="t" style="left:252.90px;top:644px;font-size:15.50px;line-height:15.50px;color:#5fd0a0;transform:scaleX(0.9328);">0%</div>
<div class="t" style="left:223.90px;top:739px;font-size:15.50px;line-height:15.50px;color:#5fd0a0;transform:scaleX(0.9637);">0%</div>
<div class="t" style="left:653.30px;top:785px;font-size:13.75px;line-height:13.75px;color:#fff;font-weight:bold;transform:scaleX(0.9250);">?</div>
<div class="t" style="left:720.35px;top:259px;font-size:19.25px;line-height:19.25px;color:#1c1c28;-webkit-text-stroke:0.35px #1c1c28;transform:scaleX(1.1265);">Evolução NPS</div>
<div class="t" style="left:877.29px;top:260px;font-size:14.50px;line-height:14.50px;color:#7b8aa3;transform:scaleX(1.1122);">NPS</div>
<div class="t" style="left:1482.10px;top:267px;font-size:18.75px;line-height:18.75px;color:#1d2b4f;-webkit-text-stroke:0.3px #1d2b4f;transform:scaleX(1.0467);">Mensal</div>
<div class="t" style="left:755.27px;top:330px;font-size:20.25px;line-height:20.25px;color:#1e1e1e;transform:scaleX(1.0269);">100</div>
<div class="t" style="left:766.70px;top:421px;font-size:20.25px;line-height:20.25px;color:#1e1e1e;transform:scaleX(1.0646);">50</div>
<div class="t" style="left:778.60px;top:512px;font-size:20.25px;line-height:20.25px;color:#1e1e1e;transform:scaleX(1.1273);">0</div>
<div class="t" style="left:759.90px;top:603px;font-size:20.25px;line-height:20.25px;color:#1e1e1e;transform:scaleX(1.0722);">-50</div>
<div class="t" style="left:751.10px;top:695px;font-size:20.25px;line-height:20.25px;color:#1e1e1e;transform:scaleX(0.9909);">-100</div>
<div class="t" style="left:813.50px;top:719px;font-size:20.25px;line-height:20.25px;color:#1e1e1e;transform:scaleX(1.1438);">Jun</div>
<div class="t" style="left:906.00px;top:719px;font-size:20.25px;line-height:20.25px;color:#1e1e1e;transform:scaleX(1.1187);">Jul</div>
<div class="t" style="left:990.10px;top:719px;font-size:20.25px;line-height:20.25px;color:#1e1e1e;transform:scaleX(1.1155);">Ago</div>
<div class="t" style="left:1083.80px;top:719px;font-size:20.25px;line-height:20.25px;color:#1e1e1e;transform:scaleX(1.0108);">Set</div>
<div class="t" style="left:1168.70px;top:719px;font-size:20.25px;line-height:20.25px;color:#1e1e1e;transform:scaleX(1.1329);">Out</div>
<div class="t" style="left:1255.44px;top:719px;font-size:20.25px;line-height:20.25px;color:#1e1e1e;transform:scaleX(1.0645);">Nov</div>
<div class="t" style="left:1344.95px;top:719px;font-size:20.25px;line-height:20.25px;color:#1e1e1e;transform:scaleX(1.0549);">Dez</div>
<div class="t" style="left:1408.80px;top:719px;font-size:20.25px;line-height:20.25px;color:#1e1e1e;transform:scaleX(1.0486);">Jan 2025</div>
<div class="t" style="left:1521.70px;top:719px;font-size:20.25px;line-height:20.25px;color:#1e1e1e;transform:scaleX(1.0020);">Fev</div>
<div class="t" style="left:1605.11px;top:719px;font-size:20.25px;line-height:20.25px;color:#1e1e1e;transform:scaleX(1.0899);">Mar</div>
<div class="t" style="left:1694.70px;top:719px;font-size:20.25px;line-height:20.25px;color:#1e1e1e;transform:scaleX(1.1080);">Abr</div>
<div class="t" style="left:1783.01px;top:719px;font-size:20.25px;line-height:20.25px;color:#1e1e1e;transform:scaleX(1.0922);">Mai</div>
<div class="t" style="left:812.00px;top:379px;font-size:15.50px;line-height:15.50px;color:#000;font-weight:bold;transform:scaleX(1.0417);">67,96</div>
<div class="t" style="left:901.30px;top:414px;font-size:15.50px;line-height:15.50px;color:#000;font-weight:bold;letter-spacing:0.033px;">48,51</div>
<div class="t" style="left:996.20px;top:390px;font-size:15.50px;line-height:15.50px;color:#000;font-weight:bold;letter-spacing:-0.749px;">61,9</div>
<div class="t" style="left:1077.40px;top:392px;font-size:15.50px;line-height:15.50px;color:#000;font-weight:bold;transform:scaleX(1.1109);">60,82</div>
<div class="t" style="left:1167.00px;top:389px;font-size:15.50px;line-height:15.50px;color:#000;font-weight:bold;transform:scaleX(1.0442);">62,24</div>
<div class="t" style="left:1255.00px;top:379px;font-size:15.50px;line-height:15.50px;color:#000;font-weight:bold;transform:scaleX(1.0559);">67,97</div>
<div class="t" style="left:1343.10px;top:374px;font-size:15.50px;line-height:15.50px;color:#000;font-weight:bold;transform:scaleX(1.0519);">70,59</div>
<div class="t" style="left:1435.80px;top:391px;font-size:15.50px;line-height:15.50px;color:#000;font-weight:bold;letter-spacing:-0.667px;">61,35</div>
<div class="t" style="left:1518.60px;top:394px;font-size:15.50px;line-height:15.50px;color:#000;font-weight:bold;transform:scaleX(1.0264);">59,38</div>
<div class="t" style="left:1605.00px;top:398px;font-size:15.50px;line-height:15.50px;color:#000;font-weight:bold;letter-spacing:-0.592px;">57,14</div>
<div class="t" style="left:1694.70px;top:372px;font-size:15.50px;line-height:15.50px;color:#000;font-weight:bold;letter-spacing:-0.517px;">71,43</div>
<div class="t" style="left:1789.00px;top:593px;font-size:15.50px;line-height:15.50px;color:#000;font-weight:bold;transform:scaleX(1.1386);">-50</div>
<div class="t" style="left:115.83px;top:858px;font-size:19.75px;line-height:19.75px;color:#1c1c28;-webkit-text-stroke:0.35px #1c1c28;transform:scaleX(1.1473);">CSAT Atendimento</div>
<div class="t" style="left:326.80px;top:859px;font-size:14.00px;line-height:14.00px;color:#7b8aa3;transform:scaleX(1.0314);">CSAT</div>
<div class="t" style="left:408.06px;top:859px;font-size:14.00px;line-height:14.00px;color:#7b8aa3;transform:scaleX(1.2353);">Filtro Aplicado</div>
<div class="t" style="left:719.54px;top:858px;font-size:19.75px;line-height:19.75px;color:#1c1c28;-webkit-text-stroke:0.35px #1c1c28;transform:scaleX(1.1362);">Evolução CSAT - Atendimento</div>
<div class="t" style="left:1041.00px;top:859px;font-size:14.00px;line-height:14.00px;color:#7b8aa3;transform:scaleX(1.0341);">CSAT</div>
<div class="t" style="left:1482.10px;top:866px;font-size:18.75px;line-height:18.75px;color:#1d2b4f;-webkit-text-stroke:0.3px #1d2b4f;transform:scaleX(1.0467);">Mensal</div>
</body>
</html>
